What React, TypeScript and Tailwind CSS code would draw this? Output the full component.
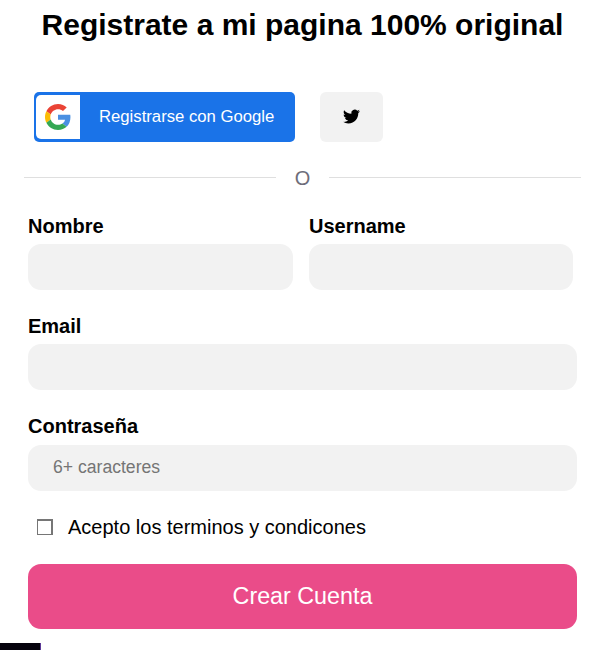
import React from "react";

function GoogleLogo() {
  return (
    <svg viewBox="0 0 48 48" className="mr-px mb-px size-[26px]" aria-hidden="true">
      <path fill="#EA4335" d="M24 9.5c3.54 0 6.71 1.22 9.21 3.6l6.85-6.85C35.9 2.38 30.47 0 24 0 14.62 0 6.51 5.38 2.56 13.22l7.98 6.19C12.43 13.72 17.74 9.5 24 9.5z" />
      <path fill="#4A90E2" d="M46.98 24.55c0-1.57-.15-3.09-.38-4.55H24v9.02h12.94c-.58 2.96-2.26 5.48-4.78 7.18l7.73 6c4.51-4.18 7.09-10.36 7.09-17.65z" />
      <path fill="#FBBC05" d="M10.53 28.59c-.48-1.45-.76-2.99-.76-4.59s.27-3.14.76-4.59l-7.98-6.19C.92 16.46 0 20.12 0 24c0 3.88.92 7.54 2.56 10.78l7.97-6.19z" />
      <path fill="#34A853" d="M24 48c6.48 0 11.93-2.13 15.89-5.81l-7.73-6c-2.15 1.45-4.92 2.3-8.16 2.3-6.26 0-11.57-4.22-13.47-9.91l-7.98 6.19C6.51 42.62 14.62 48 24 48z" />
    </svg>
  );
}

function TwitterLogo() {
  return (
    <svg viewBox="0 0 24 24" className="mr-px mb-px size-[17px]" fill="#000" aria-hidden="true">
      <path d="M23.953 4.57a10 10 0 01-2.825.775 4.958 4.958 0 002.163-2.723c-.951.555-2.005.959-3.127 1.184a4.92 4.92 0 00-8.384 4.482C7.69 8.095 4.067 6.13 1.64 3.162a4.822 4.822 0 00-.666 2.475c0 1.71.87 3.213 2.188 4.096a4.904 4.904 0 01-2.228-.616v.06a4.923 4.923 0 003.946 4.827 4.996 4.996 0 01-2.212.085 4.936 4.936 0 004.604 3.417 9.867 9.867 0 01-6.102 2.105c-.39 0-.779-.023-1.17-.067a13.995 13.995 0 007.557 2.209c9.053 0 13.998-7.496 13.998-13.985 0-.21 0-.42-.015-.63A9.935 9.935 0 0024 4.59z" />
    </svg>
  );
}

type FieldProps = { label: string; name: string; type?: string; placeholder?: string; tall?: boolean };

function Field({ label, name, type = "text", placeholder, tall = false }: FieldProps) {
  return (
    <label className="block">
      <span className={tall ? "block h-[29px] text-[20px] leading-[20px] font-bold" : "block h-[28px] text-[20px] leading-[20px] font-bold"}>
        {label}
      </span>
      <input
        name={name}
        type={type}
        placeholder={placeholder}
        className="block h-[46px] w-full rounded-[13px] bg-[#f2f2f2] px-[25px] pb-[2px] text-[17.6px] outline-none placeholder:text-[#757575]"
      />
    </label>
  );
}

export default function App() {
  return (
    <main className="flex h-[650px] w-[610px] flex-col overflow-hidden bg-white font-['Liberation_Sans',Arial,sans-serif] text-black">
      <h1 className="mr-[5px] pt-[8px] text-center text-[30px] leading-[34px] font-bold whitespace-nowrap">
        Registrate a mi pagina 100% original
      </h1>

      <div className="mt-[50px] ml-[34px] flex gap-[25px]">
        <button className="flex h-[50px] w-[261px] items-center rounded-[5px] bg-[#1a73e8] pl-[2px] text-white">
          <span className="flex h-[44px] w-[44px] items-center justify-center rounded-l-[5px] bg-white">
            <GoogleLogo />
          </span>
          <span className="ml-[19px] text-[16.7px] whitespace-nowrap">Registrarse con Google</span>
        </button>
        <button className="flex h-[50px] w-[63px] items-center justify-center rounded-[6px] bg-[#f2f2f2]">
          <TwitterLogo />
        </button>
      </div>

      <div className="mt-[24px] mr-[29px] ml-[24px] flex h-[24px] items-center">
        <span className="mb-[2px] h-px flex-1 bg-[#dfdfdf]" />
        <span className="w-[53px] text-center text-[20px] leading-[24px] text-[#6e6d7a]">O</span>
        <span className="mb-[2px] h-px flex-1 bg-[#dfdfdf]" />
      </div>

      <form className="mr-[33px] ml-[28px] flex flex-col">
        <div className="mt-[26px] mr-[4px] grid grid-cols-[265px_264px] gap-[16px]">
          <Field label="Nombre" name="nombre" />
          <Field label="Username" name="username" />
        </div>
        <div className="mt-[26px]">
          <Field label="Email" name="email" type="email" />
        </div>
        <div className="mt-[26px]">
          <Field label="Contraseña" name="password" type="password" placeholder="6+ caracteres" tall />
        </div>
        <label className="mt-[24px] ml-[9px] flex h-[24px] items-center">
          <input
            type="checkbox"
            className="size-[16px] appearance-none border-t-2 border-r-2 border-b border-l border-[#767676] bg-white"
          />
          <span className="ml-[15px] text-[20px] leading-[24px] whitespace-nowrap">Acepto los terminos y condicones</span>
        </label>
        <button type="button" className="mt-[25px] h-[65px] rounded-[13px] bg-[#ea4c89] text-[23.3px] text-white">
          Crear Cuenta
        </button>
      </form>

      <div className="mt-[14px] h-[7px] w-[41px] border-r border-[#5c3a96] bg-[#05030d]" />
    </main>
  );
}
